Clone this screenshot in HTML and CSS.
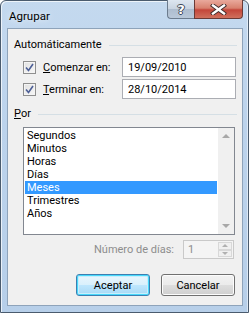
FILE: index.html
```html
<!DOCTYPE html>
<html>
<head>
<meta charset="utf-8">
<link rel="stylesheet" href="styles.css">
</head>
<body>
<div class="window">
  <div class="titlebar">
    <span class="title">Agrupar</span>
    <div class="caption-buttons">
      <div class="btn-help"><span class="help-glyph">?</span></div>
      <div class="btn-close">
        <svg width="17" height="11" viewBox="0 0 17 11">
          <path d="M3 1.5 L14 9.5 M14 1.5 L3 9.5" stroke="#3d2a2a" stroke-width="4.2" stroke-linecap="square"/>
          <path d="M3 1.5 L14 9.5 M14 1.5 L3 9.5" stroke="#ffffff" stroke-width="2.4" stroke-linecap="square"/>
        </svg>
      </div>
    </div>
  </div>
  <div class="client">
    <div class="group-head"><span>Automáticamente</span><div class="etch"></div></div>
    <div class="row row1">
      <div class="check"><svg width="13" height="13" viewBox="0 0 13 13"><path d="M3 6.5 L5.5 9.5 L10 3" fill="none" stroke="#4d5f96" stroke-width="1.6"/></svg></div>
      <label class="rowlabel"><u>C</u>omenzar en:</label>
      <div class="textbox">19/09/2010</div>
    </div>
    <div class="row row2">
      <div class="check"><svg width="13" height="13" viewBox="0 0 13 13"><path d="M3 6.5 L5.5 9.5 L10 3" fill="none" stroke="#4d5f96" stroke-width="1.6"/></svg></div>
      <label class="rowlabel"><u>T</u>erminar en:</label>
      <div class="textbox">28/10/2014</div>
    </div>
    <div class="group-head por"><span><u>P</u>or</span><div class="etch"></div></div>
    <div class="listbox">
      <ul class="items">
        <li>Segundos</li>
        <li>Minutos</li>
        <li>Horas</li>
        <li>Días</li>
        <li class="sel">Meses</li>
        <li>Trimestres</li>
        <li>Años</li>
      </ul>
      <div class="vscroll">
        <div class="arrow up"></div>
        <div class="arrow down"></div>
      </div>
    </div>
    <div class="days-row">
      <span class="days-label">Número de días:</span>
      <div class="spin">
        <span class="spin-val">1</span>
        <div class="spin-btns">
          <div class="sb"><div class="tri-up"></div></div>
          <div class="sb"><div class="tri-down"></div></div>
        </div>
      </div>
    </div>
    <div class="buttons">
      <div class="button default">Aceptar</div>
      <div class="button">Cancelar</div>
    </div>
  </div>
</div>
</body>
</html>
```
FILE: styles.css
```css
* { box-sizing: border-box; }
html, body { margin: 0; padding: 0; }
body {
  width: 249px; height: 313px; overflow: hidden;
  font-family: Roboto, "Noto Sans", sans-serif;
  font-size: 11px; line-height: 13px; color: #000;
  background: #fff;
}
.window {
  width: 249px; height: 313px;
  border: 1px solid #4a5b6e;
  border-radius: 6px 6px 0 0;
  background: linear-gradient(to bottom, #c4d9ef 0%, #bcd3ec 40%, #b7cfe9 100%);
  padding: 0 5px 6px 6px;
  display: flex; flex-direction: column;
  box-shadow: inset 1px 1px 0 rgba(255,255,255,0.7), inset -1px 0 0 rgba(255,255,255,0.5);
}
.titlebar {
  height: 27px;
  display: flex; align-items: flex-start;
}
.title {
  margin-top: 9px; margin-left: 2px;
  font-size: 11.5px; color: #000;
  text-shadow: 0 0 6px rgba(255,255,255,0.9);
}
.caption-buttons {
  margin-left: auto;
  display: flex; height: 19px;
  margin-top: -1px;
}
.btn-help {
  width: 27px; height: 19px;
  border: 1px solid #6c7c8e; border-top: none; border-right: none;
  border-radius: 0 0 0 4px;
  background: linear-gradient(to bottom, #dde6f0 0%, #c9d4e1 48%, #aebdcf 52%, #b9c8d9 100%);
  display: flex; align-items: center; justify-content: center;
}
.help-glyph {
  font-family: "DejaVu Sans", sans-serif; font-weight: bold; font-size: 13px;
  color: #fff; line-height: 1;
  text-shadow: -1px 0 #3b4656, 1px 0 #3b4656, 0 -1px #3b4656, 0 1px #3b4656;
}
.btn-close {
  width: 49px; height: 19px;
  border: 1px solid #6b3a36; border-top: none;
  border-radius: 0 0 4px 0;
  background: linear-gradient(to bottom, #e9a99c 0%, #d8816f 45%, #c4463a 55%, #d0705d 100%);
  display: flex; align-items: center; justify-content: center;
}
.client {
  flex: 1;
  background: #f0f0f0;
  border: 1px solid #8ea3ba;
  display: flex; flex-direction: column;
  padding: 0 5px 0 6px;
}
.group-head {
  display: flex; align-items: center;
  height: 15px; margin-top: 8px;
}
.group-head span { white-space: nowrap; }
.etch {
  flex: 1; height: 1px; background: #d5dfe5;
  margin-left: 7px; margin-top: 1px;
}
.group-head.por { margin-top: 7px; }
.row {
  display: flex; align-items: center;
  height: 20px; padding-left: 9px;
}
.row1 { margin-top: 5px; }
.row2 { margin-top: 2px; }
.check {
  width: 13px; height: 13px;
  border: 1px solid #8f8f8f;
  background: linear-gradient(135deg, #e1e1e1 0%, #f7f7f7 100%);
  box-shadow: inset 0 0 0 1px #f4f4f4;
  display: flex;
}
.check svg { margin: -1px; }
.rowlabel { margin-left: 7px; width: 79px; white-space: nowrap; }
.textbox {
  width: 114px; height: 20px;
  border: 1px solid #abadb3;
  background: #fff;
  padding: 2px 0 0 5px;
  line-height: 15px;
}
.listbox {
  margin-top: 6px; margin-left: 9px;
  width: 212px; height: 108px;
  border: 1px solid #828790;
  background: #fff;
  display: flex;
}
.items {
  list-style: none; margin: 0; padding: 1px 0 0 1px;
  flex: 1;
}
.items li {
  height: 13px; line-height: 13px;
  padding-left: 2px;
  white-space: nowrap;
}
.items li.sel { background: #3399ff; color: #fff; }
.vscroll {
  width: 17px;
  background: #f0f0f0;
  border-left: 1px solid #fff;
  display: flex; flex-direction: column; justify-content: space-between;
  padding: 6px 0;
  align-items: center;
}
.arrow { width: 0; height: 0; border-left: 4px solid transparent; border-right: 4px solid transparent; }
.arrow.up { border-bottom: 4px solid #a8a8a8; }
.arrow.down { border-top: 4px solid #a8a8a8; }
.days-row {
  display: flex; align-items: center; justify-content: flex-end;
  margin-top: 5px; height: 19px;
  padding-right: 3px;
}
.days-label { color: #8d8d8d; margin-right: 9px; }
.spin {
  width: 51px; height: 19px;
  border: 1px solid #c9c9c9;
  background: #f4f4f4;
  display: flex;
}
.spin-val { flex: 1; color: #8d8d8d; padding-left: 4px; line-height: 17px; }
.spin-btns { width: 15px; display: flex; flex-direction: column; padding: 1px 1px 1px 0; }
.sb {
  flex: 1; border: 1px solid #d8d8d8; background: #f0f0f0;
  display: flex; align-items: center; justify-content: center;
}
.tri-up { width: 0; height: 0; border-left: 3px solid transparent; border-right: 3px solid transparent; border-bottom: 3px solid #b0b0b0; }
.tri-down { width: 0; height: 0; border-left: 3px solid transparent; border-right: 3px solid transparent; border-top: 3px solid #b0b0b0; }
.buttons {
  display: flex; justify-content: flex-end; gap: 11px;
  margin-top: 15px; padding-right: 2px;
}
.button {
  width: 74px; height: 22px;
  border: 1px solid #707070; border-radius: 3px;
  background: linear-gradient(to bottom, #f2f2f2 0%, #ebebeb 50%, #dddddd 51%, #cfcfcf 100%);
  box-shadow: inset 0 0 0 1px #fcfcfc;
  display: flex; align-items: center; justify-content: center;
}
.button.default {
  border-color: #3c7fb1;
  box-shadow: inset 0 0 0 1px #48d8fb, inset 0 0 0 2px #c8eefc;
  background: linear-gradient(to bottom, #eaf6fd 0%, #d9f0fc 50%, #bee6fd 51%, #a7d9f5 100%);
}
```
